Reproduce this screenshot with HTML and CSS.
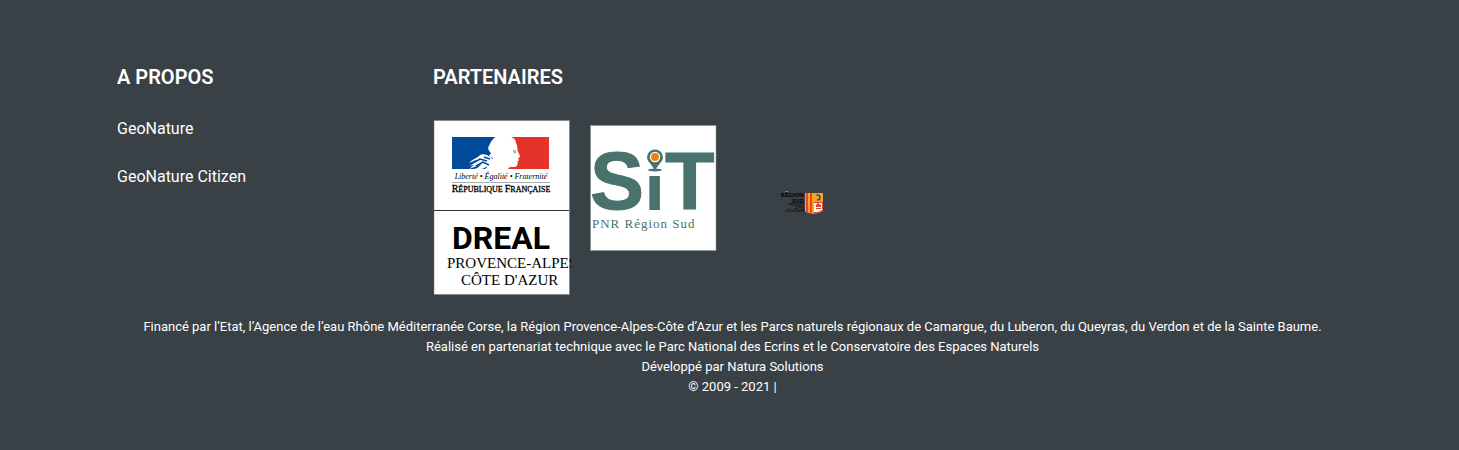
FILE: index.html
```html
<!DOCTYPE html>
<html lang="fr">
<head>
<meta charset="utf-8">
<meta name="viewport" content="width=device-width, initial-scale=1">
<title>GeoNature</title>
<link rel="stylesheet" href="styles.css">
</head>
<body>
<footer class="footer">
  <div class="footer-columns">
    <section class="about">
      <h2 class="footer-title">A PROPOS</h2>
      <ul class="about-links">
        <li><a href="#geonature">GeoNature</a></li>
        <li><a href="#citizen">GeoNature Citizen</a></li>
      </ul>
    </section>
    <section class="partners">
      <h2 class="footer-title">PARTENAIRES</h2>
      <div class="partner-logos">
        <a class="logo-dreal" href="#dreal" aria-label="DREAL Provence-Alpes-Côte d'Azur">
          <svg width="138" height="175" viewBox="0 0 138 175">
            <rect x="1" y="0.5" width="135.500" height="174" fill="#fff" stroke="#777" stroke-width="0.5"/>
            <path fill="#004a99" d="M19 17H62C59 20 57 23 56 26C54 28 56 31 58 33L56 36L60 38C57 41 56 45 57 49H46L49 47L41 49H19Z"/>
            <path fill="#e5332a" d="M78 17H116V49H75C76 47 77 47 80 47C84 47 85 45 84.500 42L86 40L85 38C88 38 87 35 85 32C84 29 85 27 83 23C83 20 81 18 78 17Z"/>
            <path fill="#fff" d="M36 49L41 45L36 46C41 44 44 41 43 40L36 43C41 38 45 38 47 35C51 33 56 36 59 38L57 49H52L55 46L49 49H43L49 44Z"/>
            <path fill="none" stroke="#004a99" stroke-width="1.500" d="M42 42L47 39L54 41M43 46L50 42L56 45M51 37L57 39"/>
            <path fill="none" stroke="#777" stroke-width="1" d="M80 31L83 31M81 33L83 32"/>
            <text class="motto" x="68" y="59">Liberté • Égalité • Fraternité</text>
            <path stroke="#999" stroke-width="0.8" d="M19 62.500H117"/>
            <text class="republic" x="68" y="72"><tspan class="republic-cap">R</tspan>ÉPUBLIQUE <tspan class="republic-cap">F</tspan>RANÇAISE</text>
            <path stroke="#333" d="M1 90.500H136"/>
            <text class="dreal" x="68" y="129">DREAL</text>
            <text class="region" x="14" y="148">PROVENCE-ALPES</text>
            <text class="region" x="28" y="165">CÔTE D'AZUR</text>
          </svg>
        </a>
        <a class="logo-sit" href="#sit" aria-label="SiT PNR Région Sud">
          <svg width="127" height="127" viewBox="0 0 127 127">
            <rect x="0.5" y="0.5" width="125.500" height="125" fill="#fff" stroke="#8a9691" stroke-width="0.6"/>
            <g fill="#48736c">
              <text class="sit-large" x="0" y="84">S</text>
              <text class="sit-small" x="56" y="84">ı</text>
              <text class="sit-large" x="75" y="84">T</text>
              <path d="M65 45C61 39 57 36 57 32.500A8 8 0 0 1 73 32.500C73 36 69 39 65 45Z"/>
              <ellipse cx="65" cy="45" rx="7" ry="1.500"/>
              <text class="sit-caption" x="2" y="103">PNR Région Sud</text>
            </g>
            <circle cx="65" cy="32" r="4.600" fill="#ee7f1a" stroke="#fff" stroke-width="1.300"/>
          </svg>
        </a>
        <a class="logo-sud" href="#region-sud" aria-label="Région Sud Provence Alpes Côte d'Azur">
          <svg width="44" height="24" viewBox="0 0 44 24">
            <text class="sud-name" x="24" y="6">RÉGION</text>
            <text class="sud-name" x="24" y="12">SUD</text>
            <path fill="#c9951f" d="M6 0H9L7 1H5Z"/>
            <g class="sud-detail"><text x="24" y="15">PROVENCE</text><text x="24" y="18">ALPES</text><text x="24" y="21">CÔTE D'AZUR</text></g>
            <path fill="#f5a51d" d="M25 2H43V18C43 21 39 22 34 23C29 22 25 22 25 19Z"/>
            <path fill="#e8432e" d="M26 2H28V22L26 20ZM30 2H32V23L30 22ZM34 11H43V17C43 20 39 22 34 23Z"/>
            <path fill="none" stroke="#35506f" stroke-width="1.500" d="M37 4C41 4 41 9 37 9"/>
            <path fill="#e8432e" d="M36 3H38V5H36Z"/>
            <path fill="#fff" d="M34 12H42V19L38 21L34 21Z"/>
            <path fill="#d94132" d="M36 14L38 12L41 14V16H36ZM36 17H41V18H36Z"/>
          </svg>
        </a>
      </div>
    </section>
  </div>
  <div class="credits">
    <p>Financé par l’Etat, l’Agence de l’eau Rhône Méditerranée Corse, la Région Provence-Alpes-Côte d’Azur et les Parcs naturels régionaux de Camargue, du Luberon, du Queyras, du Verdon et de la Sainte Baume.</p>
    <p>Réalisé en partenariat technique avec le Parc National des Ecrins et le Conservatoire des Espaces Naturels</p>
    <p>Développé par Natura Solutions</p>
    <p>© 2009 - 2021 |</p>
  </div>
</footer>
</body>
</html>
```
FILE: styles.css
```css
* { box-sizing: border-box; }
body {
  margin: 0;
  background: #394146;
  color: #fff;
  font-family: Roboto, sans-serif;
}
.footer { padding: 64px 111px 52px 117px; }
.footer-columns {
  display: grid;
  grid-template-columns: 316px 1fr;
}
.footer-title {
  margin: 0;
  font-size: 20px;
  line-height: 26px;
  font-weight: 600;
}
.about-links {
  display: grid;
  gap: 24px;
  margin: 27px 0 0;
  padding: 0;
  list-style: none;
  font-size: 16px;
  line-height: 24px;
}
.about-links a {
  color: #fff;
  text-decoration: none;
}
.partner-logos {
  display: flex;
  align-items: flex-start;
  margin-top: 30px;
}
.partner-logos a { color: #000; }
.partner-logos svg {
  display: block;
  overflow: hidden;
}
.logo-sit { margin: 5px 0 0 19px; }
.logo-sud { margin: 71px 0 0 63px; }
.motto {
  font: italic 8px "Liberation Serif", serif;
  text-anchor: middle;
}
.republic {
  font: 8px "Liberation Serif", serif;
  text-anchor: middle;
  stroke: #000;
  stroke-width: 0.3px;
}
.republic-cap { font-size: 10px; }
.dreal {
  font: bold 32px Roboto, sans-serif;
  text-anchor: middle;
}
.region { font: 15px "Liberation Serif", serif; }
.sit-large {
  font: bold 81px "Liberation Sans", sans-serif;
  stroke: #48736c;
  stroke-width: 1px;
}
.sit-small {
  font: bold 62px "Liberation Sans", sans-serif;
  stroke: #48736c;
  stroke-width: 2px;
}
.sit-caption {
  font: 13px "Liberation Serif", serif;
  letter-spacing: 1px;
}
.sud-name {
  font: bold 6px "Open Sans", sans-serif;
  text-anchor: end;
}
.sud-detail {
  font: 3px Roboto, sans-serif;
  text-anchor: end;
}
.credits {
  margin-top: 22px;
  font-size: 13px;
  line-height: 20px;
  text-align: center;
}
.credits p { margin: 0; }
```
